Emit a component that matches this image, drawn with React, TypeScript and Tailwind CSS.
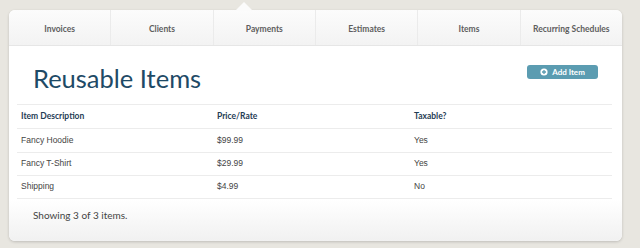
const tabs = ['Invoices', 'Clients', 'Payments', 'Estimates', 'Items', 'Recurring Schedules'];

const rows = [
  { name: 'Fancy Hoodie', price: '$99.99', taxable: 'Yes' },
  { name: 'Fancy T-Shirt', price: '$29.99', taxable: 'Yes' },
  { name: 'Shipping', price: '$4.99', taxable: 'No' },
];

const avenir = "font-['Lato','Noto_Sans',sans-serif]";
const cell = "px-1 flex items-center font-['Liberation_Sans',Arial,sans-serif] text-[8.5px] text-[#444]";
const cols = 'grid grid-cols-[196px_197px_1fr]';

const App = () => (
  <div className="w-[640px] h-[248px] bg-[#e8e6e0] pt-[10px] pl-[9px]">
    <div className="relative w-[613px] h-[231px] bg-white rounded-[6px] shadow-[0_1px_3px_rgba(0,0,0,0.18)] flex flex-col">
      <svg className="absolute left-[226px] -top-[8px]" width="18" height="9" viewBox="0 0 18 9">
        <path d="M0 9 L9 0 L18 9 Z" fill="#fbfbfb" />
      </svg>

      <div className="flex h-[36px] rounded-t-[6px] bg-gradient-to-b from-[#fcfcfc] to-[#f3f3f3] border-b border-[#e6e6e6]">
        {tabs.map((tab, i) => (
          <div
            key={tab}
            className={`flex-1 flex items-center justify-center pt-[3px] text-[8.5px] font-bold text-[#5e5e5e] ${avenir} ${
              i ? 'border-l border-[#ebebeb]' : ''
            }`}
          >
            {tab}
          </div>
        ))}
      </div>

      <div className="flex items-center justify-between h-[58px] pl-6 pr-6">
        <h1 className={`text-[25.5px] leading-none text-[#1e4a66] ${avenir} mt-[7px]`}>Reusable Items</h1>
        <button className={`flex items-center gap-1 h-[14px] w-[71px] justify-center rounded-[3px] bg-[#5b9cb1] text-white text-[8px] font-bold ${avenir} mt-[-6px]`}>
          <svg width="8" height="8" viewBox="0 0 8 8">
            <circle cx="4" cy="4" r="3.6" fill="white" />
            <path d="M4 2v4M2 4h4" stroke="#5b9cb1" strokeWidth="1.3" />
          </svg>
          Add Item
        </button>
      </div>

      <div className="ml-2 mr-[10px]">
        <div className={`${cols} h-[24px] border-t border-[#ececec]`}>
          {['Item Description', 'Price/Rate', 'Taxable?'].map((h) => (
            <div key={h} className={`px-1 flex items-center text-[8.5px] font-bold text-[#1f3d55] ${avenir}`}>
              {h}
            </div>
          ))}
        </div>
        {rows.map((r, i) => (
          <div
            key={r.name}
            className={`${cols} h-[23.5px] border-t border-[#ececec] ${i === rows.length - 1 ? 'border-b' : ''}`}
          >
            <div className={cell}>{r.name}</div>
            <div className={cell}>{r.price}</div>
            <div className={cell}>{r.taxable}</div>
          </div>
        ))}
      </div>

      <div className="flex-1 rounded-b-[6px] bg-gradient-to-b from-white to-[#f1f1f1] pl-6 pt-[9px]">
        <p className={`text-[10px] text-[#444] ${avenir}`}>Showing 3 of 3 items.</p>
      </div>
    </div>
  </div>
);

export default App;
